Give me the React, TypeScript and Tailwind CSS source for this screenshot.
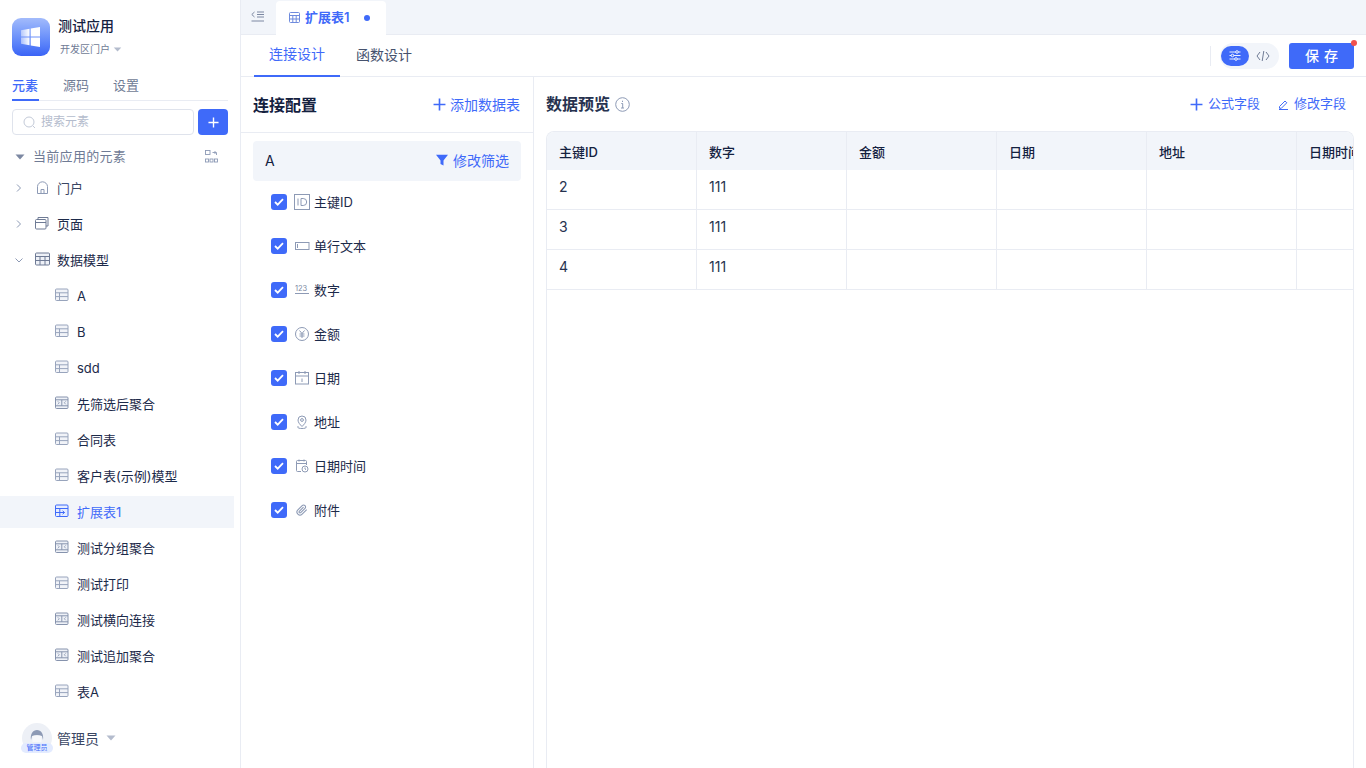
import { ReactNode } from 'react';

const FONT = "font-['Inter','Noto_Sans_CJK_SC','Noto_Sans',sans-serif]";

function TableIcon() {
  return (
    <svg width="14" height="14" viewBox="0 0 14 14" fill="none" stroke="#98a4bc">
      <rect x="0.5" y="1" width="12.5" height="11.500" rx="1" fill="#f1f3f8" />
      <path d="M0.5 4.800h12.500M0.500 8.600h12.500M4.500 4.800v7.700" />
    </svg>
  );
}

function MergeIcon() {
  return (
    <svg width="14" height="14" viewBox="0 0 14 14" fill="none" stroke="#8693ad">
      <rect x="0.5" y="1" width="12.5" height="11.500" rx="1" fill="#eef1f7" />
      <path d="M0.500 3.800h12.500M0.500 9.800h12.500M6.800 3.800v6" />
      <path d="M2.800 5.300l1.500 1.500-1.500 1.500M10.800 5.300L9.300 6.800l1.500 1.500" strokeWidth="0.8" />
    </svg>
  );
}

function ExtendIcon() {
  return (
    <svg width="14" height="14" viewBox="0 0 14 14" fill="none" stroke="#3f6af9">
      <rect x="0.5" y="1" width="12.5" height="11.500" rx="1" fill="#e6edff" />
      <path d="M0.500 4.500h12.500M4.800 4.500v8M0.500 8.500h9M7.600 6.800l1.900 1.700-1.900 1.700" />
    </svg>
  );
}

function Chevron({ open }: { open?: boolean }) {
  return (
    <svg width="10" height="10" viewBox="0 0 10 10" fill="none" stroke="#8d9ab5" strokeWidth="1">
      {open ? <path d="M1.500 3.500L5 7l3.500-3.500" /> : <path d="M3 1.500L6.500 5 3 8.500" />}
    </svg>
  );
}

function Caret({ className = '' }: { className?: string }) {
  return (
    <svg width="10" height="6" viewBox="0 0 10 6" className={className}>
      <path d="M0.500 0.500h9L5 5.500z" fill="currentColor" />
    </svg>
  );
}

function Plus({ size = 13, stroke = '#3f6af9', width = 1.5 }: { size?: number; stroke?: string; width?: number }) {
  return (
    <svg width={size} height={size} viewBox="0 0 12 12" fill="none" stroke={stroke} strokeWidth={width}>
      <path d="M6 0.500v11M0.500 6h11" />
    </svg>
  );
}

function TreeChild({ label, icon, active }: { label: string; icon: ReactNode; active?: boolean }) {
  return (
    <div className={`flex h-8 items-center pl-[55px] text-[13px] ${active ? 'bg-[#f2f5fa] text-[#3f6af9]' : 'text-[#1c2a4a]'}`}>
      <span className="mr-2 flex w-[14px] -translate-y-px">{icon}</span>
      <span className="translate-y-px">{label}</span>
    </div>
  );
}

function TreeParent({ label, icon, open, muted }: { label: string; icon: ReactNode; open?: boolean; muted?: boolean }) {
  return (
    <div className={`flex h-8 items-center pl-[14px] text-[13px] ${muted ? 'text-[#3a4663]' : 'text-[#1c2a4a]'}`}>
      <span className="flex w-[21px]">
        <Chevron open={open} />
      </span>
      <span className="mr-2 flex w-[14px] -translate-y-px justify-center">{icon}</span>
      <span className="translate-y-px">{label}</span>
    </div>
  );
}

const stroke = { fill: 'none', stroke: '#8d9ab5', strokeWidth: 1 };

const fieldIcons: Record<string, ReactNode> = {
  id: (
    <svg width="16" height="16" viewBox="0 0 16 16" {...stroke}>
      <rect x="0.500" y="0.500" width="15" height="15" />
      <path d="M4 4.500v7M7 4.500v7h2.200a3.500 3.500 0 000-7z" />
    </svg>
  ),
  text: (
    <svg width="16" height="16" viewBox="0 0 16 16" {...stroke}>
      <rect x="1.500" y="4.500" width="13.500" height="7" />
      <path d="M3.500 6v4" />
    </svg>
  ),
  num: (
    <svg width="16" height="16" viewBox="0 0 16 16" {...stroke}>
      <text x="1" y="8.500" fontSize="7.500" fill="#7c88a2" stroke="none" fontFamily="Inter">123</text>
      <path d="M1 11.500h14" />
    </svg>
  ),
  money: (
    <svg width="16" height="16" viewBox="0 0 16 16" {...stroke}>
      <circle cx="8" cy="8" r="6.500" />
      <path d="M5.500 4.500L8 7.500l2.500-3M8 7.500V12M5.500 8h5M5.500 10h5" />
    </svg>
  ),
  date: (
    <svg width="16" height="16" viewBox="0 0 16 16" {...stroke}>
      <rect x="1.500" y="2.500" width="13" height="11.500" />
      <path d="M1.500 6h13M5 1v3M11 1v3M8 8.500v3.500" />
    </svg>
  ),
  addr: (
    <svg width="16" height="16" viewBox="0 0 16 16" {...stroke}>
      <path d="M8 12.500C6 10.500 4 8.500 4 6a4 4 0 018 0c0 2.500-2 4.500-4 6.500z" />
      <circle cx="8" cy="6" r="1.400" />
      <path d="M4.500 12c-2 1.500 0 2.500 3.500 2.500s5.500-1 3.500-2.500" />
    </svg>
  ),
  datetime: (
    <svg width="16" height="16" viewBox="0 0 16 16" {...stroke}>
      <path d="M7 13.500H3.500a1 1 0 01-1-1V3.500a1 1 0 011-1h8a1 1 0 011 1V7M2.500 5.500h10M5 1.500v2M10 1.500v2" />
      <circle cx="11" cy="11" r="3" />
      <path d="M11 9.500V11l1 .7" />
    </svg>
  ),
  file: (
    <svg width="16" height="16" viewBox="-4 -4 32 32" fill="none" stroke="#8d9ab5" strokeWidth="2.200">
      <path d="M21.440 11.050l-9.190 9.190a6 6 0 01-8.490-8.490l8.570-8.570A4 4 0 1118 8.840l-8.590 8.570a2 2 0 01-2.830-2.830l8.490-8.480" />
    </svg>
  ),
};

const fields = [
  ['主键ID', 'id'],
  ['单行文本', 'text'],
  ['数字', 'num'],
  ['金额', 'money'],
  ['日期', 'date'],
  ['地址', 'addr'],
  ['日期时间', 'datetime'],
  ['附件', 'file'],
];

const columns = ['主键ID', '数字', '金额', '日期', '地址', '日期时间'];
const rows = ['2', '3', '4'];

export default function App() {
  return (
    <div className={`flex h-[768px] w-[1366px] overflow-hidden bg-white ${FONT}`}>
      {/* sidebar */}
      <aside className="flex w-[241px] shrink-0 flex-col border-r border-[#e9ecf3]">
        <div className="flex pl-3 pt-[18px]">
          <div className="flex h-[38px] w-[38px] items-center justify-center rounded-[9px] bg-gradient-to-b from-[#a3bbfb] to-[#3b63f6]">
            <svg width="20" height="20" viewBox="0 0 20 20">
              <defs>
                <linearGradient id="win" x1="0" x2="1" y1="0" y2="0">
                  <stop offset="0" stopColor="#fff" stopOpacity="0.45" />
                  <stop offset="0.45" stopColor="#fff" />
                </linearGradient>
              </defs>
              <path d="M0 3.200l8.500-1.400v7.700H0zM9.700 1.600L19 0v9.500H9.700zM0 10.600h8.500v7.600L0 16.800zM9.700 10.600H19V20l-9.300-1.600z" fill="url(#win)" />
            </svg>
          </div>
          <div className="-mt-px ml-2">
            <div className="h-[17px] text-[14px] font-medium leading-[17px] text-[#14213f]">测试应用</div>
            <div className="ml-[2px] mt-[8px] flex items-center text-[10px] leading-[14px] text-[#6f7b95]">
              开发区门户
              <Caret className="ml-[3px] h-[5px] w-[9px] text-[#b4bccd]" />
            </div>
          </div>
        </div>

        <div className="mx-3 mt-[20px] flex h-[25px] w-[216px] gap-[24px] border-b border-[#e9ecf3] text-[13px] leading-[18px] text-[#6f7b95]">
          <div className="h-[25px] w-[27px] border-b-2 border-[#3f6af9] font-medium text-[#3f6af9]">元素</div>
          <div>源码</div>
          <div>设置</div>
        </div>

        <div className="mx-3 mt-[8px] flex gap-1">
          <div className="flex h-[26px] w-[182px] items-center rounded border border-[#dfe3ec] pl-[10px] text-[12px] text-[#b4bccd]">
            <svg width="13" height="13" viewBox="0 0 13 13" fill="none" stroke="#c3cad8" className="mr-[5px]">
              <circle cx="6" cy="6" r="5" />
              <path d="M10 10l2 2" />
            </svg>
            搜索元素
          </div>
          <div className="flex h-[26px] w-[30px] items-center justify-center rounded bg-[#3f6af9]">
            <Plus size={11} stroke="#fff" />
          </div>
        </div>

        <div className="mt-[12px] flex h-[20px] items-center pl-[15px] pr-[22px] text-[13px] tracking-[0.3px] text-[#6f7b95]">
          <Caret className="mr-2 text-[#7c88a2]" />
          <span className="flex-1">当前应用的元素</span>
          <svg width="13" height="13" viewBox="0 0 13 13" fill="none" stroke="#8d9ab5" strokeWidth="0.9" className="-translate-y-px">
            <rect x="0.500" y="0.500" width="4.500" height="4" />
            <path d="M7.500 2.500h4V5M10 1v3" />
            <rect x="0.500" y="9" width="3" height="3" />
            <rect x="5" y="9" width="3" height="3" />
            <rect x="9.500" y="9" width="3" height="3" />
          </svg>
        </div>

        <div className="mr-[6px] mt-[5px] flex flex-col gap-1">
          <TreeParent
            muted
            label="门户"
            icon={
              <svg width="13" height="13" viewBox="0 0 13 13" fill="none" stroke="#8d9ab5">
                <path d="M1.500 12.500V5.500C1.500 3 4 0.800 6.500 0.800S11.500 3 11.500 5.500v7zM5 12.500V8.500h3v4" />
              </svg>
            }
          />
          <TreeParent
            label="页面"
            icon={
              <svg width="14" height="14" viewBox="0 0 14 14" fill="none" stroke="#6f7b95">
                <path d="M3 3V1.500h10v8.500h-2" />
                <rect x="0.500" y="3.500" width="10.500" height="9.500" rx="1" />
                <path d="M0.500 6.500h10.500" />
              </svg>
            }
          />
          <TreeParent
            open
            label="数据模型"
            icon={
              <svg width="15" height="14" viewBox="0 0 15 14" fill="none" stroke="#6f7b95" className="shrink-0">
                <rect x="0.500" y="1" width="14" height="12" rx="1" fill="#eef1f7" />
                <path d="M0.500 4.500h14M0.500 8.500h14M5 4.500V13M10 4.500V13" />
              </svg>
            }
          />
          <TreeChild label="A" icon={<TableIcon />} />
          <TreeChild label="B" icon={<TableIcon />} />
          <TreeChild label="sdd" icon={<TableIcon />} />
          <TreeChild label="先筛选后聚合" icon={<MergeIcon />} />
          <TreeChild label="合同表" icon={<TableIcon />} />
          <TreeChild label="客户表(示例)模型" icon={<TableIcon />} />
          <TreeChild label="扩展表1" icon={<ExtendIcon />} active />
          <TreeChild label="测试分组聚合" icon={<MergeIcon />} />
          <TreeChild label="测试打印" icon={<TableIcon />} />
          <TreeChild label="测试横向连接" icon={<MergeIcon />} />
          <TreeChild label="测试追加聚合" icon={<MergeIcon />} />
          <TreeChild label="表A" icon={<TableIcon />} />
        </div>

        <div className="ml-[21px] mt-[15px] flex items-center">
          <div className="relative h-[30px] w-[32px]">
            <div className="mx-auto h-[30px] w-[30px] rounded-full bg-[#edf0f6]">
              <svg width="30" height="30" viewBox="0 0 30 30">
                <path d="M9 17c-1-6 2-10 6-10s7 4 6 10l-1-4c-3-1-7-1-10 0z" fill="#8d9ab5" />
                <path d="M10.500 13c3-1 6-1 9 0v6h-9z" fill="#f7f8fb" />
              </svg>
            </div>
            <span className="absolute bottom-0 left-0 flex h-[10px] w-[32px] items-center justify-center rounded-[5px] bg-[#e3ebff]">
              <span className="whitespace-nowrap text-[7px] leading-[10px] text-[#3f6af9]">管理员</span>
            </span>
          </div>
          <span className="ml-[4px] text-[14px] text-[#3a4663]">管理员</span>
          <Caret className="ml-[7px] text-[#b4bccd]" />
        </div>
      </aside>

      <div className="flex min-w-0 flex-1 flex-col">
        {/* open tabs */}
        <div className="flex h-[35px] shrink-0 border-b border-[#e9ecf3] bg-[#f2f5fa]">
          <div className="flex w-[35px] items-center pb-px pl-[10px]">
            <svg width="13" height="11" viewBox="0 0 13 11" fill="none" stroke="#7c88a2">
              <path d="M3.500 1L0.800 3.500 3.500 6M6 1h7M6 3.500h7M6 6h7M0.500 10h12.500" />
            </svg>
          </div>
          <div className="mt-[1px] flex h-[35px] w-[110px] items-center rounded-t bg-white pb-[2px] pl-[13px]">
            <svg width="11" height="11" viewBox="0 0 11 11" fill="none" stroke="#6f8bdd" className="mr-[5px]">
              <rect x="0.500" y="0.500" width="10" height="10" rx="1" />
              <path d="M0.500 3.500h10M0.500 7h10M3.800 3.500v7M7.200 3.500v7" />
            </svg>
            <span className="text-[13px] font-semibold text-[#3f6af9]">扩展表1</span>
            <span className="ml-[14px] h-[6px] w-[6px] rounded-full bg-[#3f6af9]" />
          </div>
        </div>

        {/* design tabs */}
        <div className="flex h-[42px] shrink-0 items-center border-b border-[#e9ecf3] pl-[13px] pr-3">
          <div className="flex h-[42px] w-[86px] items-center justify-center border-b-2 border-[#3f6af9] pb-[2px] text-[14px] text-[#3f6af9]">连接设计</div>
          <div className="ml-[16px] pb-[2px] text-[14px] text-[#46526e]">函数设计</div>
          <div className="ml-auto flex items-center">
            <div className="mr-[9px] h-[20px] w-px bg-[#e9ecf3]" />
            <div className="flex h-[26px] w-[59px] items-center rounded-full bg-[#f2f5fa] pl-px">
              <div className="flex h-[20px] w-[28px] items-center justify-center rounded-full bg-[#3f6af9]">
                <svg width="12" height="11" viewBox="0 0 12 11" fill="none" stroke="#fff" strokeWidth="0.9">
                  <path d="M0.500 2h11M0.500 5.500h11M0.500 9h11" />
                  <circle cx="8" cy="2" r="1.300" fill="#3f6af9" />
                  <circle cx="3.500" cy="5.500" r="1.300" fill="#3f6af9" />
                  <circle cx="7" cy="9" r="1.300" fill="#3f6af9" />
                </svg>
              </div>
              <svg width="14" height="12" viewBox="0 0 14 12" fill="none" stroke="#6f7b95" className="ml-[7px]">
                <path d="M4 2L1 6l3 4M10 2l3 4-3 4M7.800 1L6.200 11" />
              </svg>
            </div>
            <button className="relative ml-[10px] h-[26px] w-[65px] rounded-[3px] bg-[#3f6af9] pl-[5px] text-[14px] font-medium tracking-[5px] text-white">
              保存
              <span className="absolute -right-[3px] -top-[3px] h-[6px] w-[6px] rounded-full bg-[#f0524f]" />
            </button>
          </div>
        </div>

        <div className="flex min-h-0 flex-1">
          {/* connection config */}
          <section className="flex w-[293px] shrink-0 flex-col border-r border-[#e9ecf3]">
            <div className="flex h-[56px] shrink-0 items-center justify-between border-b border-[#e9ecf3] px-3">
              <h2 className="text-[16px] font-semibold text-[#14213f]">连接配置</h2>
              <div className="flex items-center pr-px text-[14px] text-[#3f6af9]">
                <Plus />
                <span className="ml-[4px]">添加数据表</span>
              </div>
            </div>
            <div className="mx-3 mt-[8px] flex h-[40px] items-center justify-between rounded bg-[#f2f5fa] px-3 pb-[2px]">
              <span className="text-[14px] text-[#14213f]">A</span>
              <div className="flex items-center text-[14px] text-[#3f6af9]">
                <svg width="12" height="12" viewBox="0 0 12 12" className="mr-[5px]">
                  <path d="M0 0.800h12L7.500 6.500V11.500L4.500 10V6.500z" fill="#3f6af9" />
                </svg>
                修改筛选
              </div>
            </div>
            <div className="-mt-px flex flex-col">
              {fields.map(([label, icon]) => (
                <div key={label} className="ml-[30px] flex h-[44px] items-center text-[13px] text-[#1c2a4a]">
                  <span className="flex h-4 w-4 items-center justify-center rounded-[3px] bg-[#3f6af9]">
                    <svg width="10" height="8" viewBox="0 0 10 8" fill="none" stroke="#fff" strokeWidth="1.800">
                      <path d="M1 4l2.700 2.700L9 1.200" />
                    </svg>
                  </span>
                  <span className="ml-[7px] mr-1 flex">{fieldIcons[icon]}</span>
                  <span className="translate-y-px">{label}</span>
                </div>
              ))}
            </div>
          </section>

          {/* data preview */}
          <section className="flex min-w-0 flex-1 flex-col pl-3 pr-3">
            <div className="flex h-[54px] shrink-0 items-center">
              <h2 className="text-[16px] font-semibold text-[#26324f]">数据预览</h2>
              <svg width="15" height="15" viewBox="0 0 15 15" fill="none" stroke="#8d9ab5" className="ml-[5px]">
                <circle cx="7.500" cy="7.500" r="6.800" />
                <path d="M6.300 6.500h1.400v4.500M6 11h3M7.500 3.700v1.300" />
              </svg>
              <div className="ml-auto mr-2 flex items-center text-[13px] text-[#3f6af9]">
                <Plus />
                <span className="ml-[5px]">公式字段</span>
                <svg width="11" height="11" viewBox="0 0 11 11" fill="none" stroke="#3f6af9" className="ml-[18px] mr-[5px]">
                  <path d="M1.500 7.500L7 2l1.800 1.800-5.500 5.500H1.500zM1 10.500h9" />
                </svg>
                修改字段
              </div>
            </div>
            <div className="flex min-h-0 flex-1 flex-col overflow-hidden rounded-t-lg border-x border-t border-[#e9ecf3]">
              <div className="flex h-[38px] shrink-0 bg-[#f2f5fa]">
                {columns.map((c, i) => (
                  <div key={c} className={`flex h-[38px] w-[150px] shrink-0 items-center whitespace-nowrap border-[#e9ecf3] pl-3 pt-[3px] text-[13px] font-medium text-[#14213f] ${i < 5 ? 'border-r' : ''}`}>
                    {c}
                  </div>
                ))}
              </div>
              {rows.map((r) => (
                <div key={r} className="flex h-10 shrink-0 border-b border-[#e9ecf3]">
                  {columns.map((c, i) => (
                    <div key={c} className={`h-[39px] w-[150px] shrink-0 border-[#e9ecf3] pl-3 pt-[8px] text-[14px] leading-[18px] text-[#26324f] ${i < 5 ? 'border-r' : ''}`}>
                      {i === 0 ? r : i === 1 ? '111' : ''}
                    </div>
                  ))}
                </div>
              ))}
            </div>
          </section>
        </div>
      </div>
    </div>
  );
}
